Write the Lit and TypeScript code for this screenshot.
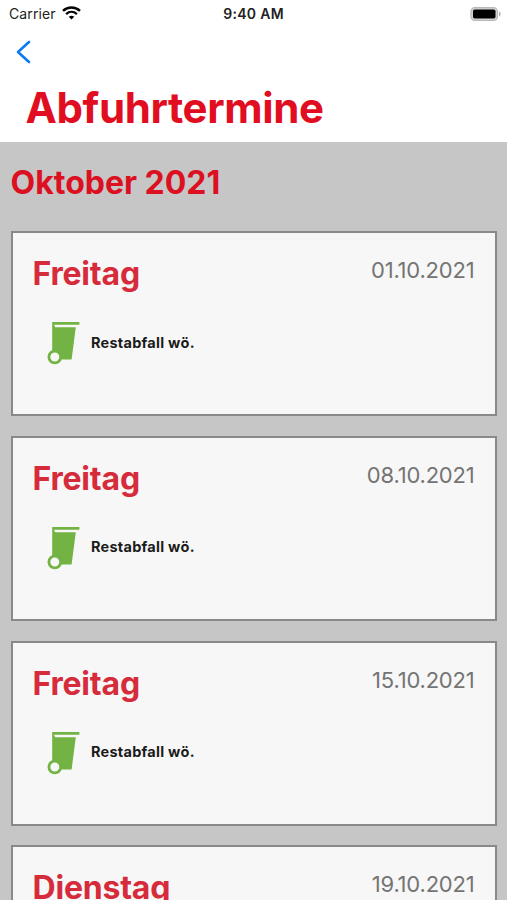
import { LitElement, html, css } from "lit";
import { customElement, property } from "lit/decorators.js";

@customElement("status-bar")
class StatusBar extends LitElement {
  static styles = css`
    :host {
      display: grid;
      grid-template-columns: 1fr auto 1fr;
      align-items: center;
      height: 28px;
      padding: 0 6px 0 6px;
      font-size: 14px;
      line-height: 28px;
      color: #222;
    }
    .carrier { display: flex; align-items: center; gap: 6px; letter-spacing: 0.1px; padding-left: 3px; }
    .time { font-weight: 600; letter-spacing: 0.3px; }
    .battery { justify-self: end; display: flex; }
    svg { display: block; }
    .wifi { margin-top: -2px; }
  `;
  render() {
    return html`
      <div class="carrier">
        <span>Carrier</span>
        <svg class="wifi" width="19" height="14" viewBox="0 0 19 14" fill="none" stroke="#050505">
          <path d="M1 4.9C5.9.4 13.1.4 18 4.9" stroke-width="2.5" />
          <path d="M4.1 8.1C7.3 5.2 11.7 5.2 14.9 8.1" stroke-width="2.3" />
          <path d="M9.5 13.6L6.7 10.8Q9.5 8.6 12.3 10.8Z" fill="#050505" stroke="none" />
        </svg>
      </div>
      <span class="time">9:40 AM</span>
      <div class="battery">
        <svg width="31" height="15" viewBox="0 0 31 15">
          <rect x="0.9" y="0.7" width="26.6" height="12.8" rx="3.9" fill="#d2d2d2" stroke="#b8b8b8" stroke-width="1.2" />
          <rect x="3" y="2.5" width="22.5" height="9" rx="1.8" fill="#000" />
          <path d="M29 4.5v5q1.7-.8 1.7-2.5T29 4.5z" fill="#b0b0b0" />
        </svg>
      </div>
    `;
  }
}

@customElement("pickup-card")
class PickupCard extends LitElement {
  @property() day = "";
  @property() date = "";
  @property() waste = "";

  static styles = css`
    :host {
      display: block;
      box-sizing: border-box;
      height: 185.3px;
      border: 2.5px solid #898989;
      background: #f7f7f7;
      padding: 20px 20.5px 0 19.5px;
    }
    .head { display: flex; justify-content: space-between; align-items: flex-start; }
    .day {
      font-size: 32px;
      line-height: 40px;
      font-weight: 700;
      letter-spacing: -0.2px;
      color: #d62b3b;
      padding-top: 1px;
    }
    .date {
      font-size: 22px;
      line-height: 34px;
      letter-spacing: -0.2px;
      color: #747474;
    }
    .item { display: flex; align-items: center; margin: 27px 0 0 14px; height: 44px; }
    .bin { display: block; margin-right: 11.4px; }
    .label {
      font-size: 14.5px;
      line-height: 20px;
      font-weight: 700;
      letter-spacing: 0.27px;
      color: #1b1b1b;
      margin-top: -1px;
    }
  `;
  render() {
    return html`
      <div class="head">
        <span class="day">${this.day}</span>
        <span class="date">${this.date}</span>
      </div>
      <div class="item">
        <svg class="bin" width="33" height="44" viewBox="0 0 33 44">
          <path d="M5.2 .9H32.4V3.8H7L8.2 6.3H28.8L24.6 38.4H5.2Z" fill="#72b343" />
          <circle cx="7.8" cy="36" r="5.9" fill="#f7f7f7" stroke="#72b343" stroke-width="2.8" />
        </svg>
        <span class="label">${this.waste}</span>
      </div>
    `;
  }
}

@customElement("app-root")
class AppRoot extends LitElement {
  private pickups = [
    { day: "Freitag", date: "01.10.2021", waste: "Restabfall wö." },
    { day: "Freitag", date: "08.10.2021", waste: "Restabfall wö." },
    { day: "Freitag", date: "15.10.2021", waste: "Restabfall wö." },
    { day: "Dienstag", date: "19.10.2021", waste: "Restabfall wö." },
  ];

  static styles = css`
    :host {
      display: flex;
      flex-direction: column;
      height: 900px;
      overflow: hidden;
      background: #fff;
      font-family: Inter, "Liberation Sans", sans-serif;
    }
    header { flex: none; height: 142px; }
    .back { display: block; margin: 11px 0 0 15px; }
    h1 {
      margin: 17px 0 0 25.5px;
      font-size: 42px;
      line-height: 52px;
      font-weight: 700;
      letter-spacing: -0.38px;
      color: #e10d20;
    }
    main { flex: 1; min-height: 0; overflow: hidden; background: #c6c6c6; padding: 0 10px 0 11px; }
    h2 {
      margin: 21px 0 28.2px -0.5px;
      font-size: 32px;
      line-height: 40px;
      font-weight: 700;
      letter-spacing: 0;
      color: #dc1021;
    }
    .list { display: flex; flex-direction: column; gap: 19.4px; }
  `;
  render() {
    return html`
      <header>
        <status-bar></status-bar>
        <svg class="back" width="18" height="26" viewBox="0 0 18 26" fill="none" stroke="#0c7bf2" stroke-width="2.6" stroke-linecap="round" stroke-linejoin="round">
          <path d="M14 3L3 13L14 23" />
        </svg>
        <h1>Abfuhrtermine</h1>
      </header>
      <main>
        <h2>Oktober 2021</h2>
        <div class="list">
          ${this.pickups.map(
            (p) => html`<pickup-card .day=${p.day} .date=${p.date} .waste=${p.waste}></pickup-card>`
          )}
        </div>
      </main>
    `;
  }
}
